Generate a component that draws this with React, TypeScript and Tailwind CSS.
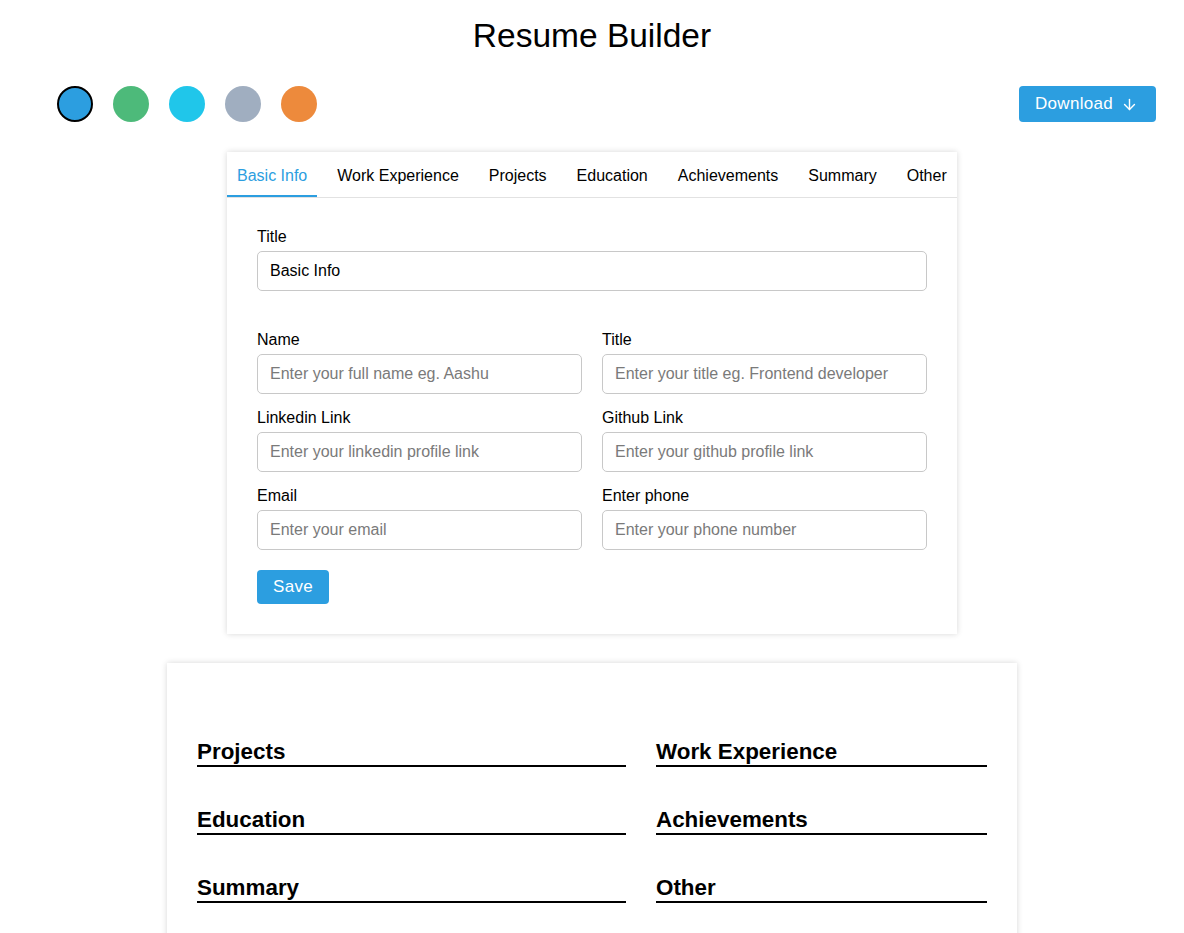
import React, { useState } from "react";
import { ArrowDown } from "lucide-react";

const colors = ["#2c9ee0", "#4dba7a", "#20c6ea", "#a0aec0", "#ed8a3c"];

const tabs = [
  "Basic Info",
  "Work Experience",
  "Projects",
  "Education",
  "Achievements",
  "Summary",
  "Other",
];

const fields = [
  { label: "Name", placeholder: "Enter your full name eg. Aashu" },
  { label: "Title", placeholder: "Enter your title eg. Frontend developer" },
  { label: "Linkedin Link", placeholder: "Enter your linkedin profile link" },
  { label: "Github Link", placeholder: "Enter your github profile link" },
  { label: "Email", placeholder: "Enter your email" },
  { label: "Enter phone", placeholder: "Enter your phone number" },
];

const Field = ({ label, placeholder, value }: { label: string; placeholder?: string; value?: string }) => (
  <div className="flex flex-col">
    <label className="text-base leading-[22px] mb-[3px] text-black">{label}</label>
    <input
      className="h-10 w-full rounded-[5px] border border-[#c8c8c8] px-[12px] text-base text-black outline-none placeholder:text-[#7a7a7a]"
      placeholder={placeholder}
      defaultValue={value}
    />
  </div>
);

const Heading = ({ text }: { text: string }) => (
  <div className="border-b-2 border-black text-[22.4px] font-bold leading-[26px] text-black">{text}</div>
);

const App = () => {
  const [active, setActive] = useState(0);
  const [color, setColor] = useState(0);

  return (
    <div className="min-h-screen bg-white font-['Liberation_Sans',Arial,sans-serif] text-black">
      <h1 className="pt-[15px] text-center text-[33.5px] leading-[42px] font-normal">Resume Builder</h1>

      <div className="mt-[29px] flex items-center justify-between pl-[57px] pr-[28px]">
        <div className="flex gap-5">
          {colors.map((c, i) => (
            <button
              key={c}
              onClick={() => setColor(i)}
              className={`h-9 w-9 rounded-full ${i === color ? "border-2 border-black" : ""}`}
              style={{ backgroundColor: c }}
            />
          ))}
        </div>
        <button className="flex h-9 items-center gap-2 rounded-[4px] bg-[#2c9ee0] pl-4 pr-[18px] text-[17px] tracking-[0.3px] text-white">
          Download <ArrowDown size={17} strokeWidth={2} />
        </button>
      </div>

      <div className="mx-auto mt-[30px] w-[730px] bg-white shadow-[0_0_6px_rgba(0,0,0,0.16)]">
        <div className="flex gap-2.5 border-b border-[#e2e2e2]">
          {tabs.map((t, i) => (
            <button
              key={t}
              onClick={() => setActive(i)}
              className={`h-[45px] border-b-2 px-2.5 pt-[4px] text-base ${
                i === active ? "border-[#2c9ee0] text-[#2c9ee0]" : "border-transparent text-black"
              }`}
            >
              {t}
            </button>
          ))}
        </div>

        <div className="px-[30px] pt-7 pb-[30px]">
          <Field label="Title" value="Basic Info" />

          <div className="mt-[38px] grid grid-cols-2 gap-x-5 gap-y-[13px]">
            {fields.map((f) => (
              <Field key={f.label} label={f.label} placeholder={f.placeholder} />
            ))}
          </div>

          <button className="mt-5 h-[34px] rounded-[4px] bg-[#2c9ee0] px-4 text-[17px] tracking-[0.3px] text-white">
            Save
          </button>
        </div>
      </div>

      <div className="mx-auto mt-[29px] w-[850px] bg-white px-[30px] pt-[76px] pb-10 shadow-[0_0_6px_rgba(0,0,0,0.16)]">
        <div className="flex gap-[30px]">
          <div className="flex w-[429px] flex-col gap-[40px]">
            <Heading text="Projects" />
            <Heading text="Education" />
            <Heading text="Summary" />
          </div>
          <div className="flex w-[331px] flex-col gap-[40px]">
            <Heading text="Work Experience" />
            <Heading text="Achievements" />
            <Heading text="Other" />
          </div>
        </div>
      </div>
    </div>
  );
};

export default App;
